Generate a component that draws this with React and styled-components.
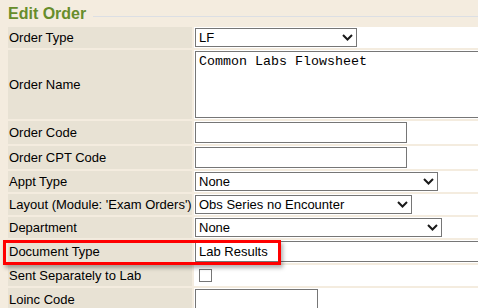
import React from "react";
import styled, { createGlobalStyle } from "styled-components";

const Global = createGlobalStyle`
  html, body {
    margin: 0;
    padding: 0;
    overflow: hidden;
    background: #f4ecdf;
  }
  body {
    font-family: "Liberation Sans", Arial, sans-serif;
    color: #000;
  }
`;

const Page = styled.div`
  position: relative;
  width: 478px;
  height: 308px;
  padding: 5px 0 0 8px;
  box-sizing: border-box;
  overflow: hidden;
`;

const LegendRow = styled.div`
  display: flex;
  height: 22px;
`;

const Legend = styled.h2`
  margin: 0;
  font-family: "Liberation Sans", Arial, sans-serif;
  font-size: 16px;
  line-height: 18px;
  font-weight: bold;
  color: #678d2b;
  white-space: nowrap;
`;

const Rule = styled.div`
  flex: 1;
  height: 1px;
  margin: 11px 0 0 7px;
  background: #dcdfe4;
`;

const FormGrid = styled.div`
  display: grid;
  grid-template-columns: 184px 420px;
  column-gap: 2px;
  row-gap: 2px;
`;

const Label = styled.div`
  display: flex;
  align-items: center;
  padding: 0 1px;
  background: #e8e2d4;
  font-size: 13px;
  white-space: nowrap;
`;

const Value = styled.div`
  display: flex;
  align-items: ${(p) => (p.$top ? "flex-start" : "center")};
  min-height: 21px;
  box-sizing: border-box;
  padding: 1px;
  background: #fff;
`;

const SelectBox = styled.div`
  display: flex;
  align-items: center;
  justify-content: space-between;
  width: ${(p) => p.$w}px;
  height: 19px;
  box-sizing: border-box;
  border: 1px solid #767676;
  background: #fff;
  padding: 0 3px 0 3px;
  font-size: 13px;
  line-height: 17px;
  color: #000;
`;

const TextInput = styled.input`
  width: ${(p) => p.$w}px;
  height: 21px;
  box-sizing: border-box;
  margin: 0;
  border: 1px solid #767676;
  background: #fff;
  padding: 0 3px;
  font-family: "Liberation Sans", Arial, sans-serif;
  font-size: 13px;
  color: #000;
  outline: none;
`;

const TextArea = styled.textarea`
  width: 400px;
  height: 67px;
  box-sizing: border-box;
  margin: 0;
  border: 1px solid #767676;
  background: #fff;
  padding: 2px 3px;
  font-family: "Liberation Mono", "Courier New", monospace;
  font-size: 13.33px;
  color: #000;
  resize: none;
  outline: none;
`;

const Check = styled.span`
  display: inline-block;
  width: 13px;
  height: 13px;
  box-sizing: border-box;
  margin-left: 4px;
  border: 1px solid #767676;
  background: #fff;
`;

const Highlight = styled.div`
  position: absolute;
  left: 3px;
  top: 240px;
  width: 278px;
  height: 25px;
  box-sizing: border-box;
  border: 3px solid #f00;
  box-shadow: 2px 3px 4px rgba(0, 0, 0, 0.3);
  pointer-events: none;
`;

const Chevron = () => (
  <svg width="11" height="7" viewBox="0 0 11 7">
    <path d="M1 1 L5.5 5.5 L10 1" fill="none" stroke="#1a1a1a" strokeWidth="2" />
  </svg>
);

const Select = ({ w, children }) => (
  <SelectBox $w={w}>
    <span>{children}</span>
    <Chevron />
  </SelectBox>
);

export default function App() {
  return (
    <>
      <Global />
      <Page>
        <LegendRow>
          <Legend>Edit Order</Legend>
          <Rule />
        </LegendRow>
        <FormGrid>
          <Label>Order Type</Label>
          <Value>
            <Select w={162}>LF</Select>
          </Value>

          <Label>Order Name</Label>
          <Value $top>
            <TextArea readOnly value="Common Labs Flowsheet" />
          </Value>

          <Label>Order Code</Label>
          <Value>
            <TextInput $w={212} readOnly value="" />
          </Value>

          <Label>Order CPT Code</Label>
          <Value>
            <TextInput $w={212} readOnly value="" />
          </Value>

          <Label>Appt Type</Label>
          <Value>
            <Select w={243}>None</Select>
          </Value>

          <Label>Layout (Module: 'Exam Orders')</Label>
          <Value>
            <Select w={217}>Obs Series no Encounter</Select>
          </Value>

          <Label>Department</Label>
          <Value>
            <Select w={247}>None</Select>
          </Value>

          <Label>Document Type</Label>
          <Value>
            <TextInput $w={400} readOnly value="Lab Results" />
          </Value>

          <Label>Sent Separately to Lab</Label>
          <Value>
            <Check />
          </Value>

          <Label>Loinc Code</Label>
          <Value>
            <TextInput $w={123} readOnly value="" />
          </Value>
        </FormGrid>
        <Highlight />
      </Page>
    </>
  );
}
